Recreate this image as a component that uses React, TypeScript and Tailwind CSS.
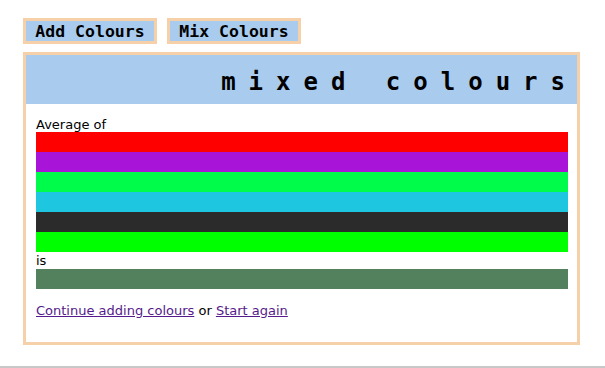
import React from "react";

const colours = ["#ff0000", "#a815d9", "#00fc4a", "#1ec6df", "#2b2b2b", "#00ff00"];

export default function App() {
  return (
    <div className="w-[605px] h-[368px] bg-white flex flex-col overflow-hidden" style={{ fontFamily: '"DejaVu Sans", sans-serif' }}>
      <div className="flex-1 pl-[23px] pt-[18px]">
        <div className="flex gap-[10px]">
          <button className="h-[26px] w-[134px] pt-[1px] border-[3px] border-[#f5d0a8] bg-[#a9cbee] text-black font-bold text-[16.5px] leading-[19px] font-['DejaVu_Sans_Mono',monospace] whitespace-nowrap">
            Add Colours
          </button>
          <button className="h-[26px] w-[134px] pt-[1px] border-[3px] border-[#f5d0a8] bg-[#a9cbee] text-black font-bold text-[16.5px] leading-[19px] font-['DejaVu_Sans_Mono',monospace] whitespace-nowrap">
            Mix Colours
          </button>
        </div>
        <div className="mt-[8px] w-[557px] h-[293px] border-[3px] border-[#f5d0a8] flex flex-col">
          <div className="h-[49px] bg-[#a9cbee] flex items-center justify-end">
            <h1 className="font-bold text-[24px] leading-[28px] tracking-[13px] text-black font-['DejaVu_Sans_Mono',monospace] whitespace-pre mt-[5px] -mr-[1px]">
              mixed colours
            </h1>
          </div>
          <div className="pt-[13px] pl-[10px] pr-[9px] text-[13px] text-black">
            <div className="h-[15px] leading-[15px]">Average of</div>
            {colours.map((c) => (
              <div key={c} className="h-[20px]" style={{ backgroundColor: c }} />
            ))}
            <div className="h-[17px] leading-[17px]">is</div>
            <div className="h-[20px] bg-[#53815e]" />
            <div className="mt-[14px] h-[15px] leading-[15px]">
              <a href="#" className="text-[#551a8b] underline">Continue adding colours</a> or{" "}
              <a href="#" className="text-[#551a8b] underline">Start again</a>
            </div>
          </div>
        </div>
      </div>
      <div className="h-[2px] bg-[#c8c8c8]" />
    </div>
  );
}
